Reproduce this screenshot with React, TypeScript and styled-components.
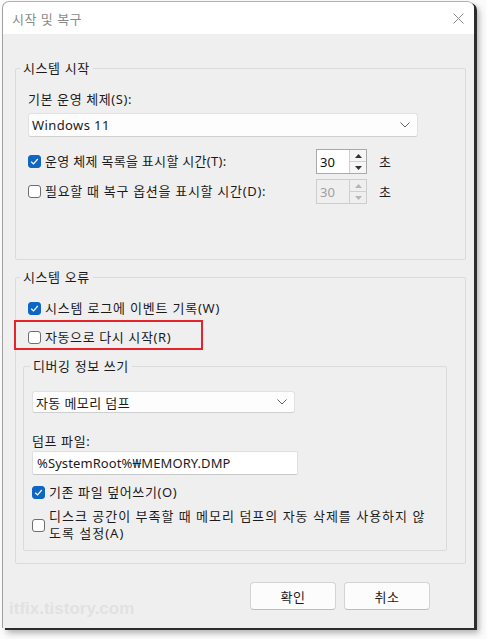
import React from "react";
import styled, { createGlobalStyle } from "styled-components";

const Global = createGlobalStyle`
  html, body { margin: 0; padding: 0; background: #fbfbfb; }
  body {
    font-family: "Noto Sans", "Noto Sans CJK KR", sans-serif;
    color: #1b1b1b;
    width: 487px; height: 639px; overflow: hidden;
  }
  * { box-sizing: border-box; }
`;

const Window = styled.div`
  position: relative;
  margin: 1px 0 0 2px;
  width: 472px;
  height: 627px;
  border-left: 1px solid #a0a0a0;
  border-top: 1px solid #b0b0b0;
  border-radius: 7px 7px 0 0;
  box-shadow: 3px 2px 0 #2d2d2d, 5px 5px 6px rgba(0, 0, 0, 0.3);
  background: #f0eff0;
  display: flex;
  flex-direction: column;
`;

const TitleBar = styled.div`
  height: 32px;
  flex: 0 0 32px;
  background: #ffffff;
  border-radius: 7px 7px 0 0;
  display: flex;
  align-items: center;
  justify-content: space-between;
  padding: 0 8px 0 9px;
`;

const Title = styled.span`
  font-size: 13px;
  color: #8a8a8a;
  letter-spacing: 0.5px;
`;

const CloseIcon = styled.svg`
  width: 11px;
  height: 11px;
  margin-right: 2px;
`;

const Body = styled.div`
  flex: 1;
  padding: 25px 0 0 12px;
  display: flex;
  flex-direction: column;
`;

const Group = styled.fieldset<{ $w: number; $pb: number; $mt?: number }>`
  margin: ${(p) => p.$mt ?? 0}px 0 0 0;
  width: ${(p) => p.$w}px;
  border: 1px solid #dcdbdc;
  border-radius: 2px;
  padding: 13px 11px ${(p) => p.$pb}px 12px;
  min-width: 0;
`;

const GroupLegend = styled.legend`
  font-size: 13px;
  line-height: 18px;
  padding: 0 3px;
  margin-left: -8px;
  letter-spacing: 0.6px;
`;

const InnerGroup = styled.fieldset`
  margin: 11px 0 12px -5px;
  width: 424px;
  border: 1px solid #dcdbdc;
  border-radius: 2px;
  padding: 16px 8px 8px 8px;
  min-width: 0;
`;

const InnerLegend = styled.legend`
  font-size: 13px;
  line-height: 18px;
  padding: 0 3px;
  margin-left: -2px;
  letter-spacing: 0.6px;
`;

const Label = styled.div<{ $mt?: number }>`
  font-size: 13px;
  line-height: 18px;
  margin-top: ${(p) => p.$mt ?? 0}px;
  letter-spacing: 0.6px;
`;

const Select = styled.div<{ $w: number; $h: number; $mt: number }>`
  width: ${(p) => p.$w}px;
  height: ${(p) => p.$h}px;
  margin-top: ${(p) => p.$mt}px;
  background: #fdfdfd;
  border: 1px solid #e2e1e2;
  border-bottom-color: #cfcfcf;
  border-radius: 3px;
  display: flex;
  align-items: center;
  justify-content: space-between;
  padding: 0 7px 0 3px;
  font-size: 13px;
  letter-spacing: 0.4px;
`;

const Chevron = styled.svg`
  width: 10px;
  height: 6px;
`;

const TextInput = styled.div`
  width: 266px;
  height: 24px;
  margin-top: 1px;
  background: #ffffff;
  border: 1px solid #e0dfe0;
  border-bottom-color: #c8c8c8;
  border-radius: 2px;
  display: flex;
  align-items: center;
  padding-left: 4px;
  font-size: 13px;
  letter-spacing: 0.1px;
`;

const Row = styled.div<{ $mt: number; $h?: number }>`
  position: relative;
  display: flex;
  align-items: center;
  margin-top: ${(p) => p.$mt}px;
  min-height: ${(p) => p.$h ?? 18}px;
`;

const CheckLabel = styled.div<{ $w?: number; $ls?: number }>`
  display: flex;
  align-items: center;
  flex: 0 0 ${(p) => (p.$w ? `${p.$w}px` : "auto")};
  font-size: 13px;
  line-height: 17px;
  letter-spacing: ${(p) => p.$ls ?? 0.6}px;
`;

const Box = styled.span<{ $on?: boolean }>`
  flex: 0 0 13px;
  width: 13px;
  height: 13px;
  margin-right: 4px;
  border-radius: 3px;
  background: ${(p) => (p.$on ? "#0f66c2" : "#ffffff")};
  border: 1px solid ${(p) => (p.$on ? "#0f66c2" : "#6e6e6e")};
  display: inline-flex;
  align-items: center;
  justify-content: center;
`;

const SpinBox = styled.div<{ $off?: boolean }>`
  width: 51px;
  height: 25px;
  display: flex;
  border: 1px solid ${(p) => (p.$off ? "#cdcdcd" : "#a9a9a9")};
  background: ${(p) => (p.$off ? "transparent" : "#ffffff")};
`;

const SpinValue = styled.div<{ $off?: boolean }>`
  flex: 1;
  display: flex;
  align-items: center;
  padding-left: 3px;
  font-size: 13px;
  color: ${(p) => (p.$off ? "#a0a0a0" : "#111")};
`;

const SpinButtons = styled.div`
  width: 17px;
  display: flex;
  flex-direction: column;
  border-left: 1px solid #cfcfcf;
`;

const SpinBtn = styled.div<{ $off?: boolean; $top?: boolean }>`
  flex: 1;
  display: flex;
  align-items: center;
  justify-content: center;
  background: ${(p) => (p.$off ? "#f0eff0" : "#f6f6f6")};
  border-bottom: ${(p) => (p.$top ? "1px solid #cfcfcf" : "none")};
`;

const Unit = styled.span`
  font-size: 13px;
  margin-left: 12px;
`;

const Highlight = styled.div`
  position: absolute;
  left: -14px;
  top: -8px;
  width: 189px;
  height: 30px;
  border: 2px solid #e5232b;
  pointer-events: none;
`;

const ButtonRow = styled.div`
  display: flex;
  gap: 8px;
  margin-top: 18px;
  padding-left: 235px;
`;

const Button = styled.div`
  width: 86px;
  height: 28px;
  background: #fcfcfc;
  border: 1px solid #d3d3d3;
  border-bottom-color: #bdbdbd;
  border-radius: 4px;
  display: flex;
  align-items: center;
  justify-content: center;
  font-size: 13px;
  letter-spacing: 0.6px;
`;

const Watermark = styled.div`
  position: absolute;
  left: 6px;
  bottom: 9px;
  font-family: "Liberation Sans", Arial, sans-serif;
  font-weight: bold;
  font-size: 17px;
  color: #e2e1e2;
`;

const Check = ({ on }: { on?: boolean }) => (
  <Box $on={on}>
    {on && (
      <svg width="9" height="9" viewBox="0 0 9 9">
        <path d="M1.2 4.8 L3.5 7 L7.8 2" fill="none" stroke="#fff" strokeWidth="1.2" />
      </svg>
    )}
  </Box>
);

const ChevronDown = () => (
  <Chevron viewBox="0 0 10 6">
    <path d="M0.5 0.5 L5 5 L9.5 0.5" fill="none" stroke="#606060" strokeWidth="1" />
  </Chevron>
);

const Tri = ({ up, off }: { up?: boolean; off?: boolean }) => (
  <svg width="7" height="4" viewBox="0 0 7 4">
    <path d={up ? "M0 4 L3.5 0 L7 4 Z" : "M0 0 L3.5 4 L7 0 Z"} fill={off ? "#b5b5b5" : "#333"} />
  </svg>
);

const Spinner = ({ off }: { off?: boolean }) => (
  <SpinBox $off={off}>
    <SpinValue $off={off}>30</SpinValue>
    <SpinButtons>
      <SpinBtn $off={off} $top>
        <Tri up off={off} />
      </SpinBtn>
      <SpinBtn $off={off}>
        <Tri off={off} />
      </SpinBtn>
    </SpinButtons>
  </SpinBox>
);

export default function App() {
  return (
    <>
      <Global />
      <Window>
        <TitleBar>
          <Title>시작 및 복구</Title>
          <CloseIcon viewBox="0 0 11 11">
            <path d="M0.5 0.5 L10.5 10.5 M10.5 0.5 L0.5 10.5" stroke="#8a8a8a" strokeWidth="1" />
          </CloseIcon>
        </TitleBar>
        <Body>
          <Group $w={451} $pb={55}>
            <GroupLegend>시스템 시작</GroupLegend>
            <Label>기본 운영 체제(S):</Label>
            <Select $w={390} $h={24} $mt={5}>
              <span>Windows 11</span>
              <ChevronDown />
            </Select>
            <Row $mt={12} $h={25}>
              <CheckLabel $w={288} $ls={0.3}>
                <Check on />
                운영 체제 목록을 표시할 시간(T):
              </CheckLabel>
              <Spinner />
              <Unit>초</Unit>
            </Row>
            <Row $mt={5} $h={25}>
              <CheckLabel $w={288} $ls={0.7}>
                <Check />
                필요할 때 복구 옵션을 표시할 시간(D):
              </CheckLabel>
              <Spinner off />
              <Unit>초</Unit>
            </Row>
          </Group>

          <Group $w={451} $pb={0} $mt={8}>
            <GroupLegend>시스템 오류</GroupLegend>
            <Row $mt={0}>
              <CheckLabel $ls={0.8}>
                <Check on />
                시스템 로그에 이벤트 기록(W)
              </CheckLabel>
            </Row>
            <Row $mt={11}>
              <CheckLabel>
                <Check />
                자동으로 다시 시작(R)
              </CheckLabel>
              <Highlight />
            </Row>
            <InnerGroup>
              <InnerLegend>디버깅 정보 쓰기</InnerLegend>
              <Select $w={263} $h={22} $mt={0}>
                <span>자동 메모리 덤프</span>
                <ChevronDown />
              </Select>
              <Label $mt={19}>덤프 파일:</Label>
              <TextInput>%SystemRoot%₩MEMORY.DMP</TextInput>
              <Row $mt={8}>
                <CheckLabel>
                  <Check on />
                  기존 파일 덮어쓰기(O)
                </CheckLabel>
              </Row>
              <Row $mt={7}>
                <CheckLabel $ls={1}>
                  <Check />
                  <span>
                    디스크 공간이 부족할 때 메모리 덤프의 자동 삭제를 사용하지 않
                    <br />
                    도록 설정(A)
                  </span>
                </CheckLabel>
              </Row>
            </InnerGroup>
          </Group>

          <ButtonRow>
            <Button>확인</Button>
            <Button>취소</Button>
          </ButtonRow>
        </Body>
        <Watermark>itfix.tistory.com</Watermark>
      </Window>
    </>
  );
}
